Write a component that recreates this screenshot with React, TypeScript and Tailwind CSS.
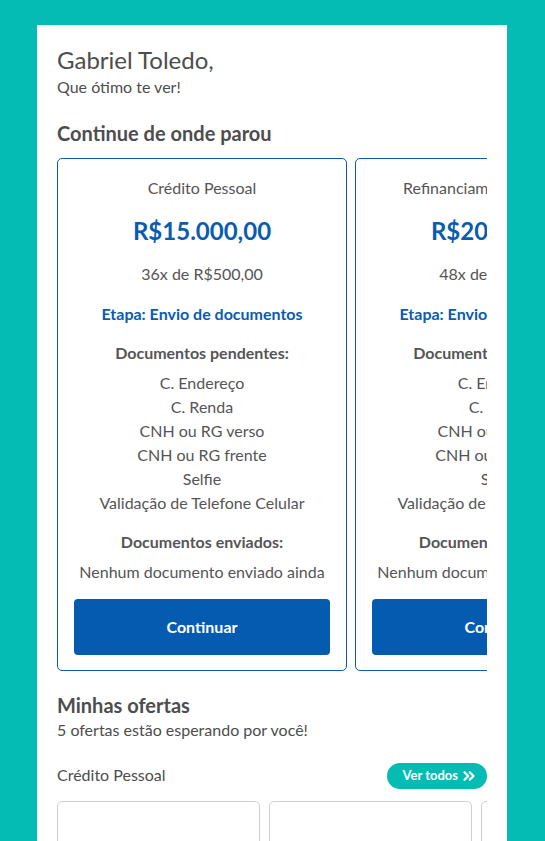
import { ChevronsRight } from "lucide-react";

const pendentes = [
    "C. Endereço",
    "C. Renda",
    "CNH ou RG verso",
    "CNH ou RG frente",
    "Selfie",
    "Validação de Telefone Celular",
];

const propostas = [
    { tipo: "Crédito Pessoal", valor: "R$15.000,00", parcelas: "36x de R$500,00" },
    { tipo: "Refinanciamento de Veículo", valor: "R$20.000,00", parcelas: "48x de R$520,00" },
];

const PropostaCard = ({ tipo, valor, parcelas }: { tipo: string; valor: string; parcelas: string }) => {
    return (
        <div className="w-[290px] shrink-0 rounded-[5px] border border-[#0a5caf] px-4 pt-[19px] pb-[15px] text-center text-[16px] text-[#555]">
            <p className="leading-[20px] whitespace-nowrap">{tipo}</p>
            <p className="mt-[18px] text-[24px] leading-[30px] font-bold text-[#0a5caf]">{valor}</p>
            <p className="mt-[18px] leading-[20px]">{parcelas}</p>
            <p className="mt-[20px] leading-[20px] font-bold text-[#0a5caf] whitespace-nowrap">
                Etapa: Envio de documentos
            </p>
            <p className="mt-[19px] leading-[20px] font-bold whitespace-nowrap">Documentos pendentes:</p>
            <ul className="mt-[8px]">
                {pendentes.map((doc) => (
                    <li key={doc} className="leading-[24px] whitespace-nowrap">
                        {doc}
                    </li>
                ))}
            </ul>
            <p className="mt-[17px] leading-[20px] font-bold whitespace-nowrap">Documentos enviados:</p>
            <p className="mt-[10px] leading-[20px] whitespace-nowrap">Nenhum documento enviado ainda</p>
            <button className="mt-[17px] h-[56px] w-full rounded-[4px] bg-[#055bb0] text-[16px] font-bold text-white">
                Continuar
            </button>
        </div>
    );
};

export default function App() {
    return (
        <div className="min-h-[841px] bg-[#05bcb4] pt-[25px] font-['Lato','Noto_Sans',sans-serif]">
            <div className="ml-[37px] w-[470px] min-h-[816px] bg-white px-5 pt-[22px] text-[#4d4d4d]">
                <h1 className="text-[24px] leading-[26px]">Gabriel Toledo,</h1>
                <p className="mt-[4px] text-[16px] leading-[20px]">Que ótimo te ver!</p>

                <h2 className="mt-[24px] text-[20px] leading-[24px] font-bold">Continue de onde parou</h2>
                <div className="mt-[13px] flex gap-2 overflow-hidden">
                    {propostas.map((p) => (
                        <PropostaCard key={p.tipo} {...p} />
                    ))}
                </div>

                <h2 className="mt-[22px] text-[20px] leading-[24px] font-bold">Minhas ofertas</h2>
                <p className="mt-[3px] text-[16px] leading-[20px]">5 ofertas estão esperando por você!</p>

                <div className="mt-[23px] flex h-[26px] items-center justify-between">
                    <span className="-mt-[2px] text-[16px] leading-[20px]">Crédito Pessoal</span>
                    <button className="flex h-[26px] w-[100px] items-center justify-end gap-[2px] rounded-full bg-[#05bcb4] pr-[9px] text-[13px] font-bold text-white">
                        Ver todos
                        <ChevronsRight size={18} strokeWidth={3} />
                    </button>
                </div>

                <div className="mt-[12px] flex gap-[9px] overflow-hidden">
                    <div className="h-[200px] w-[203px] shrink-0 rounded-[5px] border border-[#cfcfcf]" />
                    <div className="h-[200px] w-[203px] shrink-0 rounded-[5px] border border-[#cfcfcf]" />
                    <div className="h-[200px] w-[203px] shrink-0 rounded-[5px] border border-[#cfcfcf]" />
                </div>
            </div>
        </div>
    );
}
